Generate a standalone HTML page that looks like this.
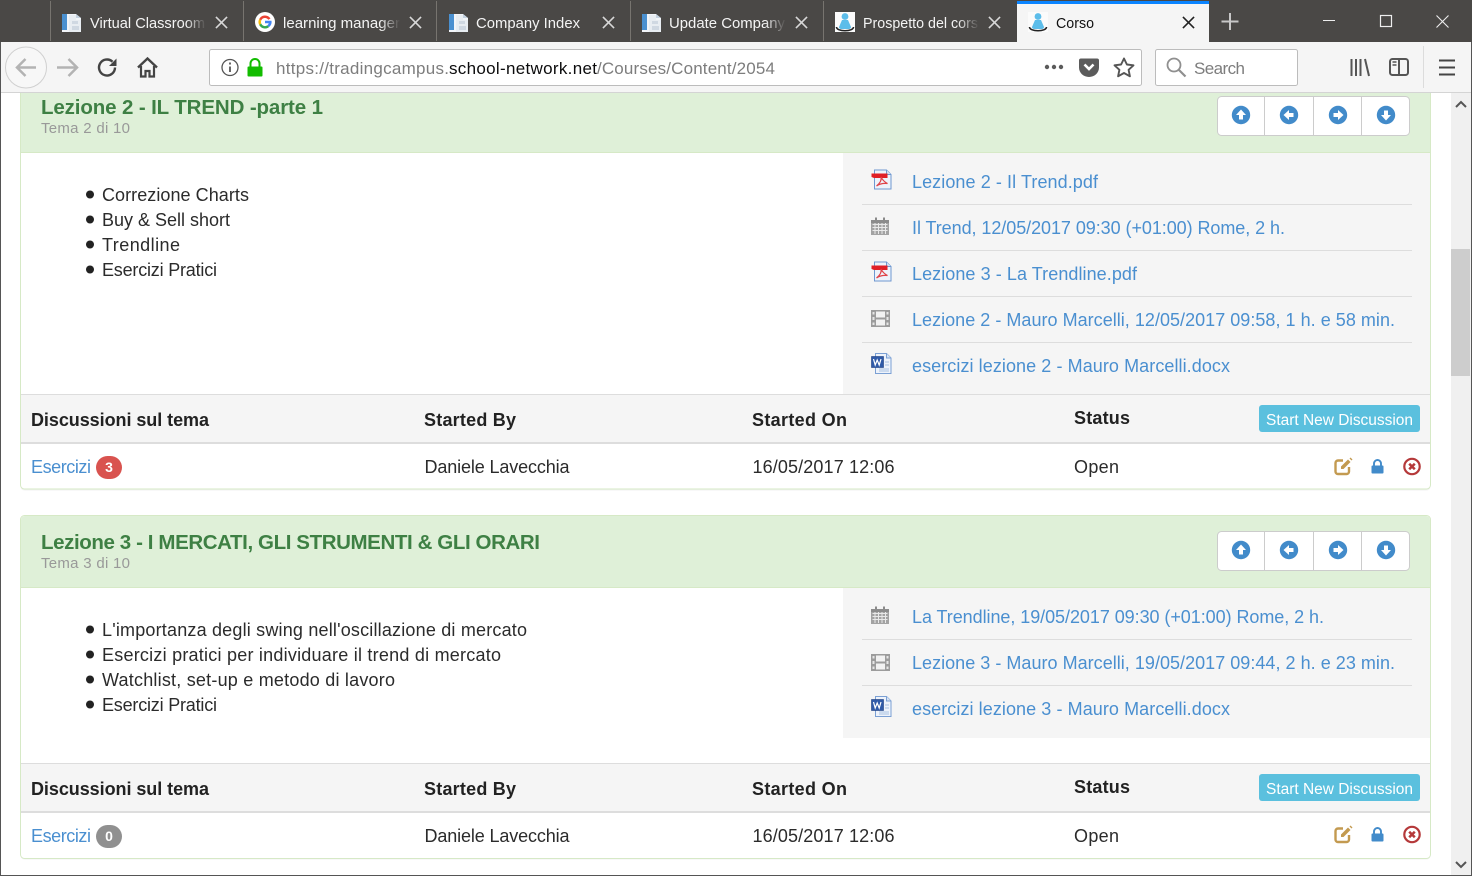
<!DOCTYPE html>
<html lang="it"><head><meta charset="utf-8"><title>Corso</title>
<style>
html,body{margin:0;padding:0;background:#fff;overflow:hidden}
svg{display:block;font-family:"Liberation Sans",sans-serif}
.tab{font-size:15px;fill:#f4f4f4}
.h{font-weight:bold;font-size:20.500px;fill:#3e8044}
.s{font-size:15px;fill:#999}
.b{font-size:18px;fill:#2b2b2b}
.l{font-size:18px;fill:#4a8fd0}
.t{font-weight:bold;font-size:18px;fill:#222}
.w{font-size:15.500px;fill:#fff}
</style></head><body>
<svg width="1472" height="876" viewBox="0 0 1472 876" xmlns="http://www.w3.org/2000/svg">
<defs>
<linearGradient id="fd" x1="0" x2="1" y1="0" y2="0"><stop offset="0" stop-color="#4a4846" stop-opacity="0"/><stop offset="1" stop-color="#4a4846"/></linearGradient>
<symbol id="doc" viewBox="0 0 20 20" overflow="visible"><path d="M0 2h14l5 4v14H0z" fill="#f2f5f9"/><path d="M0 2h5v16H0z" fill="#4a90d0"/><path d="M7 3h7v5h5v12H7z" fill="#e8edf2"/><path d="M10 9h6v3h-6zM10 14h7v4h-7z" fill="#cfd8e2"/><path d="M14 2l5 4h-5z" fill="#c4d2e0"/></symbol>
<symbol id="avatar" viewBox="0 0 20 20" overflow="visible"><rect width="20" height="20" fill="#fbfbfb"/><circle cx="10" cy="4.500" r="3.400" fill="#5cbdea"/><path d="M7 8h6l3 7a3 2 0 0 1-2 2H6a3 2 0 0 1-2-2z" fill="#5cbdea"/><path d="M1.500 15c0 5 17 5 17 0" fill="none" stroke="#222" stroke-width="1.600"/></symbol>
<symbol id="x" viewBox="-7 -7 14 14" overflow="visible"><path d="M-6-6L6 6M6-6L-6 6" stroke="currentColor" stroke-width="1.700" fill="none"/></symbol>
<symbol id="pdf" viewBox="0 0 21 21" overflow="visible"><path d="M3.500 1h12l4.500 4.500v14.500h-16.500z" fill="#eef3fb" stroke="#6f98d0"/><path d="M15.500 1v4.500h4.500" fill="#d5e2f3" stroke="#6f98d0"/><path d="M0.500 4.500h16v4.500h-13.500l-2.500-1z" fill="#e01f26"/><path d="M10 8c1 4-2 7-4.500 9 3-2 7-3 11-2.500-3-1.500-5-3.500-6.500-6.500z" fill="none" stroke="#e0444a" stroke-width="1.200"/></symbol>
<symbol id="cal" viewBox="0 0 18 18" overflow="visible"><path d="M0 3h18v15H0z" fill="#a3a3a3"/><path d="M4 .5h2v3H4zM12 .5h2v3h-2z" fill="#8a8a8a"/><path d="M0 3h18v3H0z" fill="#8c8c8c"/><path d="M1.500 7.500h15M1.500 10.500h15M1.500 13.500h15M4 6v11M7.500 6v11M11 6v11M14.500 6v11" stroke="#e9e9e9" stroke-width="1"/></symbol>
<symbol id="film" viewBox="0 0 19 17" overflow="visible"><rect width="19" height="17" fill="#9c9c9c"/><rect x="5" y="1.500" width="9" height="6" fill="#f2f2f2"/><rect x="5" y="9.500" width="9" height="6" fill="#f2f2f2"/><path d="M1.500 2h2v2.500h-2zM1.500 7h2v3h-2zM1.500 12.500h2v2.500h-2zM15.500 2h2v2.500h-2zM15.500 7h2v3h-2zM15.500 12.500h2v2.500h-2z" fill="#e6e6e6"/></symbol>
<symbol id="word" viewBox="0 0 21 21" overflow="visible"><path d="M4.500 .5h11l4.500 4.500v15.500h-15.500z" fill="#eef3fb" stroke="#7ba0d4"/><path d="M15.500 .5v4.500h4.500" fill="#d5e2f3" stroke="#7ba0d4"/><rect x=".5" y="3.500" width="12" height="11" fill="#2f5aa8" stroke="#1e3f80" stroke-width=".6"/><path d="M2.500 6l1.700 6 2-5 2 5 1.800-6" fill="none" stroke="#fff" stroke-width="1.200"/><path d="M14 9h4M14 12h4M8 16h10M8 18h10" stroke="#a8c0e0"/></symbol>
<symbol id="up" viewBox="-9.500 -9.500 19 19" overflow="visible"><circle r="9.200" fill="#428bca"/><path d="M0-5.500L5 0H2v4.500h-4V0H-5z" fill="#fff"/></symbol>
<symbol id="left" viewBox="-9.500 -9.500 19 19" overflow="visible"><circle r="9.200" fill="#428bca"/><path d="M-5.500 0L0-5V-2h4.500v4H0V5z" fill="#fff"/></symbol>
<symbol id="right" viewBox="-9.500 -9.500 19 19" overflow="visible"><circle r="9.200" fill="#428bca"/><path d="M5.500 0L0-5V-2h-4.500v4H0V5z" fill="#fff"/></symbol>
<symbol id="down" viewBox="-9.500 -9.500 19 19" overflow="visible"><circle r="9.200" fill="#428bca"/><path d="M0 5.500L5 0H2v-4.500h-4V0H-5z" fill="#fff"/></symbol>
<symbol id="edit" viewBox="0 0 19 19" overflow="visible"><path d="M9 3.500H4a2.500 2.500 0 0 0-2.500 2.500v8.500A2.500 2.500 0 0 0 4 17h8.500a2.500 2.500 0 0 0 2.500-2.500V10" fill="none" stroke="#c39a50" stroke-width="2.400"/><path d="M7 9.500L14 2.500l2.500 2.500-7 7H7z" fill="#c39a50"/><path d="M15.500 1.500l1-1 2 2-1 1z" fill="#c39a50"/></symbol>
<symbol id="lock" viewBox="0 0 13 15" overflow="visible"><path d="M3 7V4.500a3.500 3.500 0 0 1 7 0V7" fill="none" stroke="#428bca" stroke-width="1.900"/><rect x=".5" y="6.500" width="12" height="8" rx="1" fill="#428bca"/></symbol>
<symbol id="rm" viewBox="-9.500 -9.500 19 19" overflow="visible"><circle r="7.700" fill="#fff" stroke="#b5393a" stroke-width="2.200"/><path d="M-2.800-2.800L2.800 2.800M2.800-2.800L-2.800 2.800" stroke="#b5393a" stroke-width="2.500"/></symbol>
<clipPath id="pc"><rect x="18" y="93" width="1415" height="400"/></clipPath>
</defs>

<rect width="1472" height="876" fill="#fff"/>

<!-- tab strip -->
<rect width="1472" height="42" fill="#4a4846"/>
<g stroke="#77746f"><path d="M50.500 1v40M243.500 1v40M436.500 1v40M630.500 1v40M823.500 1v40"/></g>
<use href="#doc" x="62" y="12" width="20" height="20"/>
<g transform="translate(255 12)"><circle cx="10" cy="10" r="10" fill="#fff"/><path d="M15.500 6.500A6.500 6.500 0 0 0 4.200 7L6.200 8.500A4 4 0 0 1 13.300 7.800z" fill="#ea4335"/><path d="M4.200 7a6.500 6.500 0 0 0 0 6l2-1.500a4 4 0 0 1 0-3z" fill="#fbbc05"/><path d="M4.200 13a6.500 6.500 0 0 0 10 2l-2-1.600a4 4 0 0 1-6-1.900z" fill="#34a853"/><path d="M16.500 8.800H10v2.500h3.700a3 3 0 0 1-1.500 2.100l2 1.600A6.500 6.500 0 0 0 16.500 8.800z" fill="#4285f4"/></g>
<use href="#doc" x="449" y="12" width="20" height="20"/>
<use href="#doc" x="642" y="12" width="20" height="20"/>
<use href="#avatar" x="835" y="12" width="20" height="20"/>
<text class="tab" x="90" y="28" textLength="115" lengthAdjust="spacingAndGlyphs">Virtual Classroom</text>
<text class="tab" x="283" y="28" textLength="117" lengthAdjust="spacingAndGlyphs">learning manager</text>
<text class="tab" x="476" y="28" textLength="104" lengthAdjust="spacingAndGlyphs">Company Index</text>
<text class="tab" x="669" y="28" textLength="116" lengthAdjust="spacingAndGlyphs">Update Company</text>
<text class="tab" x="863" y="28" textLength="115" lengthAdjust="spacingAndGlyphs">Prospetto del cors</text>
<g fill="url(#fd)"><rect x="186" y="10" width="20" height="24"/><rect x="380" y="10" width="20" height="24"/><rect x="765" y="10" width="21" height="24"/><rect x="958" y="10" width="21" height="24"/></g>
<g color="#d8d8d8"><use href="#x" x="215" y="16" width="13" height="13"/><use href="#x" x="409" y="16" width="13" height="13"/><use href="#x" x="602" y="16" width="13" height="13"/><use href="#x" x="795" y="16" width="13" height="13"/><use href="#x" x="988" y="16" width="13" height="13"/></g>
<rect x="1017" y="1" width="192" height="41" fill="#f5f5f5"/><rect x="1017" y="1" width="192" height="3" fill="#0a84ff"/>
<use href="#avatar" x="1028" y="12" width="20" height="20"/>
<text x="1056" y="28" font-size="15" fill="#111" textLength="38" lengthAdjust="spacingAndGlyphs">Corso</text>
<g color="#222"><use href="#x" x="1182" y="16" width="13" height="13"/></g>
<path d="M1230 13v17M1221.500 21.500h17" stroke="#c8c8c8" stroke-width="2" fill="none"/>
<path d="M1323 20.500h12" stroke="#eee" fill="none"/>
<rect x="1380.500" y="15.500" width="11" height="11" fill="none" stroke="#eee" stroke-width="1.200"/>
<path d="M1436.500 15.500l12 12M1448.500 15.500l-12 12" stroke="#eee" stroke-width="1.100" fill="none"/>

<!-- toolbar -->
<rect y="42" width="1472" height="50" fill="#f5f5f5"/>
<rect y="92" width="1472" height="1" fill="#d4d4d4"/>
<circle cx="26" cy="67.500" r="20.500" fill="#f7f7f7" stroke="#d0d0d0"/>
<path d="M36 67.500H17M25.500 59l-8.500 8.500 8.500 8.500" fill="none" stroke="#b3b3b3" stroke-width="2.500"/>
<path d="M57 67.500h19M68.500 59l8.500 8.500-8.500 8.500" fill="none" stroke="#b3b3b3" stroke-width="2.500"/>
<path d="M115 67.500a8 8 0 1 1-2.500-5.800" fill="none" stroke="#444" stroke-width="2.400"/><path d="M116.500 58.500v7.500h-7.500z" fill="#444"/>
<path d="M138 67.500l9.500-9 9.500 9" fill="none" stroke="#444" stroke-width="2.400"/><path d="M141 66v10.500h4.500v-5.500h4v5.500h4.500V66" fill="none" stroke="#444" stroke-width="2.200"/>
<rect x="209.500" y="49.500" width="932" height="36" rx="2" fill="#fff" stroke="#bcbcbc"/>
<circle cx="230" cy="67.500" r="8" fill="none" stroke="#555" stroke-width="1.300"/><path d="M230 66.500v5.500M230 62.500v2" stroke="#555" stroke-width="1.800"/>
<path d="M250.500 67v-3.500a4.500 4.500 0 0 1 9 0V67" fill="none" stroke="#12bc00" stroke-width="2"/><rect x="247.500" y="66.500" width="15" height="10" rx="1" fill="#12bc00"/>
<text x="276" y="74" font-size="17" fill="#7d7d7d" textLength="173" lengthAdjust="spacing">https://tradingcampus.</text>
<text x="449" y="74" font-size="17" fill="#0c0c0d" textLength="148" lengthAdjust="spacing">school-network.net</text>
<text x="597" y="74" font-size="17" fill="#7d7d7d" textLength="178" lengthAdjust="spacing">/Courses/Content/2054</text>
<g fill="#5b5b5b"><circle cx="1047" cy="67" r="2.200"/><circle cx="1054" cy="67" r="2.200"/><circle cx="1061" cy="67" r="2.200"/></g>
<path d="M1079 60.500a2 2 0 0 1 2-2h16a2 2 0 0 1 2 2v7a10 9.500 0 0 1-20 0z" fill="#5b5b5b"/><path d="M1084.500 64.500l4.500 4.500 4.500-4.500" fill="none" stroke="#fff" stroke-width="2.600"/>
<path d="M1124 58.500l2.900 6 6.600.8-4.900 4.500 1.300 6.500-5.900-3.300-5.900 3.300 1.300-6.500-4.900-4.500 6.600-.8z" fill="none" stroke="#555" stroke-width="1.900" stroke-linejoin="round"/>
<rect x="1155.500" y="49.500" width="142" height="36" rx="2" fill="#fff" stroke="#bcbcbc"/>
<circle cx="1174" cy="65" r="6.500" fill="none" stroke="#8f8f8f" stroke-width="1.800"/><path d="M1179 70l6.500 6.500" stroke="#8f8f8f" stroke-width="2.200"/>
<text x="1194" y="74" font-size="17" fill="#7d7d7d" textLength="51" lengthAdjust="spacing">Search</text>
<path d="M1351.500 59v17M1356 59v17M1360.500 59v17M1365 59l4 17" stroke="#555" stroke-width="2" fill="none"/>
<rect x="1390" y="59" width="18" height="16" rx="2.500" fill="none" stroke="#555" stroke-width="2"/><path d="M1399 59v16" stroke="#555" stroke-width="2"/><path d="M1392.500 62h4M1392.500 65h4" stroke="#555" stroke-width="1.500"/>
<path d="M1423.500 46v42" stroke="#dcdcdc"/>
<path d="M1439 60.500h16M1439 67.500h16M1439 74.500h16" stroke="#444" stroke-width="2"/>

<!-- page background / panel 1 -->
<g clip-path="url(#pc)">
<rect x="20.500" y="71" width="1410" height="419.500" rx="4" fill="#ececec" opacity=".7"/>
<rect x="20.500" y="70" width="1410" height="419" rx="4" fill="#fff" stroke="#d6e9c6"/>
<rect x="21" y="93" width="1409" height="59" fill="#dff0d8"/>
<rect x="21" y="152" width="1409" height="1" fill="#d6e9c6"/>
<rect x="843" y="153" width="587" height="241" fill="#f5f5f5"/>
<rect x="21" y="394" width="1409" height="48" fill="#f5f5f5"/>
<rect x="21" y="394" width="1409" height="1" fill="#ddd"/>
<rect x="21" y="442" width="1409" height="2" fill="#ddd"/>
</g>
<text class="h" x="41" y="114" textLength="282" lengthAdjust="spacing">Lezione 2 - IL TREND -parte 1</text>
<text class="s" x="41" y="133" textLength="89" lengthAdjust="spacing">Tema 2 di 10</text>
<rect x="1217.500" y="96.500" width="192" height="39" rx="4" fill="#fff" stroke="#ccc"/>
<path d="M1264.500 96v40M1313.500 96v40M1361.500 96v40" stroke="#ccc"/>
<use href="#up" x="1231.500" y="105.500" width="19" height="19"/><use href="#left" x="1279.500" y="105.500" width="19" height="19"/><use href="#right" x="1328.500" y="105.500" width="19" height="19"/><use href="#down" x="1376.500" y="105.500" width="19" height="19"/>
<g fill="#222"><circle cx="90" cy="194.500" r="4"/><circle cx="90" cy="219.500" r="4"/><circle cx="90" cy="244.500" r="4"/><circle cx="90" cy="269.500" r="4"/></g>
<text class="b" x="102" y="201" textLength="147" lengthAdjust="spacing">Correzione Charts</text>
<text class="b" x="102" y="226" textLength="128" lengthAdjust="spacing">Buy &amp; Sell short</text>
<text class="b" x="102" y="251" textLength="78" lengthAdjust="spacing">Trendline</text>
<text class="b" x="102" y="276" textLength="115" lengthAdjust="spacing">Esercizi Pratici</text>
<path d="M862 204.500h550M862 250.500h550M862 296.500h550M862 342.500h550" stroke="#ddd"/>
<use href="#pdf" x="871" y="169" width="21" height="21"/>
<use href="#cal" x="871" y="217" width="18" height="18"/>
<use href="#pdf" x="871" y="261" width="21" height="21"/>
<use href="#film" x="871" y="310" width="19" height="17"/>
<use href="#word" x="871" y="353" width="21" height="21"/>
<text class="l" x="912" y="188" textLength="186" lengthAdjust="spacing">Lezione 2 - Il Trend.pdf</text>
<text class="l" x="912" y="234" textLength="373" lengthAdjust="spacing">Il Trend, 12/05/2017 09:30 (+01:00) Rome, 2 h.</text>
<text class="l" x="912" y="280" textLength="225" lengthAdjust="spacing">Lezione 3 - La Trendline.pdf</text>
<text class="l" x="912" y="326" textLength="483" lengthAdjust="spacing">Lezione 2 - Mauro Marcelli, 12/05/2017 09:58, 1 h. e 58 min.</text>
<text class="l" x="912" y="372" textLength="318" lengthAdjust="spacing">esercizi lezione 2 - Mauro Marcelli.docx</text>
<text class="t" x="31" y="426" textLength="178" lengthAdjust="spacing">Discussioni sul tema</text>
<text class="t" x="424" y="426" textLength="92" lengthAdjust="spacing">Started By</text>
<text class="t" x="752" y="426" textLength="95" lengthAdjust="spacing">Started On</text>
<text class="t" x="1074" y="424" textLength="56" lengthAdjust="spacing">Status</text>
<rect x="1259" y="405" width="161" height="27" rx="3" fill="#5bc0de"/>
<text class="w" x="1266" y="425" textLength="147" lengthAdjust="spacing">Start New Discussion</text>
<text class="l" x="31" y="473" textLength="60" lengthAdjust="spacing">Esercizi</text>
<rect x="96" y="456" width="26" height="23" rx="11.500" fill="#d9534f"/>
<text x="109" y="472" font-size="14" font-weight="bold" fill="#fff" text-anchor="middle">3</text>
<text class="b" x="424.500" y="473" textLength="145" lengthAdjust="spacing">Daniele Lavecchia</text>
<text class="b" x="752.500" y="473" textLength="142" lengthAdjust="spacing">16/05/2017 12:06</text>
<text class="b" x="1074" y="473" textLength="45" lengthAdjust="spacing">Open</text>
<use href="#edit" x="1334" y="457" width="19" height="19"/>
<use href="#lock" x="1371" y="459" width="13" height="15"/>
<use href="#rm" x="1402.500" y="457" width="19" height="19"/>

<!-- panel 2 -->
<rect x="20.500" y="516.500" width="1410" height="343" rx="4" fill="#ececec" opacity=".7"/>
<rect x="20.500" y="515.500" width="1410" height="343" rx="4" fill="#fff" stroke="#d6e9c6"/>
<path d="M21 587V520a4 4 0 0 1 4-4h1401a4 4 0 0 1 4 4v67z" fill="#dff0d8"/>
<rect x="21" y="587" width="1409" height="1" fill="#d6e9c6"/>
<rect x="843" y="588" width="587" height="150" fill="#f5f5f5"/>
<rect x="21" y="763" width="1409" height="48" fill="#f5f5f5"/>
<rect x="21" y="763" width="1409" height="1" fill="#ddd"/>
<rect x="21" y="811" width="1409" height="2" fill="#ddd"/>
<text class="h" x="41" y="549" textLength="499" lengthAdjust="spacing">Lezione 3 - I MERCATI, GLI STRUMENTI &amp; GLI ORARI</text>
<text class="s" x="41" y="568" textLength="89" lengthAdjust="spacing">Tema 3 di 10</text>
<rect x="1217.500" y="531.500" width="192" height="39" rx="4" fill="#fff" stroke="#ccc"/>
<path d="M1264.500 531v40M1313.500 531v40M1361.500 531v40" stroke="#ccc"/>
<use href="#up" x="1231.500" y="540.500" width="19" height="19"/><use href="#left" x="1279.500" y="540.500" width="19" height="19"/><use href="#right" x="1328.500" y="540.500" width="19" height="19"/><use href="#down" x="1376.500" y="540.500" width="19" height="19"/>
<g fill="#222"><circle cx="90" cy="629.500" r="4"/><circle cx="90" cy="654.500" r="4"/><circle cx="90" cy="679.500" r="4"/><circle cx="90" cy="704.500" r="4"/></g>
<text class="b" x="102" y="636" textLength="425" lengthAdjust="spacing">L'importanza degli swing nell'oscillazione di mercato</text>
<text class="b" x="102" y="661" textLength="399" lengthAdjust="spacing">Esercizi pratici per individuare il trend di mercato</text>
<text class="b" x="102" y="686" textLength="293" lengthAdjust="spacing">Watchlist, set-up e metodo di lavoro</text>
<text class="b" x="102" y="711" textLength="115" lengthAdjust="spacing">Esercizi Pratici</text>
<path d="M862 639.500h550M862 685.500h550" stroke="#ddd"/>
<use href="#cal" x="871" y="606" width="18" height="18"/>
<use href="#film" x="871" y="654" width="19" height="17"/>
<use href="#word" x="871" y="696" width="21" height="21"/>
<text class="l" x="912" y="623" textLength="412" lengthAdjust="spacing">La Trendline, 19/05/2017 09:30 (+01:00) Rome, 2 h.</text>
<text class="l" x="912" y="669" textLength="483" lengthAdjust="spacing">Lezione 3 - Mauro Marcelli, 19/05/2017 09:44, 2 h. e 23 min.</text>
<text class="l" x="912" y="715" textLength="318" lengthAdjust="spacing">esercizi lezione 3 - Mauro Marcelli.docx</text>
<text class="t" x="31" y="795" textLength="178" lengthAdjust="spacing">Discussioni sul tema</text>
<text class="t" x="424" y="795" textLength="92" lengthAdjust="spacing">Started By</text>
<text class="t" x="752" y="795" textLength="95" lengthAdjust="spacing">Started On</text>
<text class="t" x="1074" y="793" textLength="56" lengthAdjust="spacing">Status</text>
<rect x="1259" y="774" width="161" height="27" rx="3" fill="#5bc0de"/>
<text class="w" x="1266" y="794" textLength="147" lengthAdjust="spacing">Start New Discussion</text>
<text class="l" x="31" y="842" textLength="60" lengthAdjust="spacing">Esercizi</text>
<rect x="96" y="825" width="26" height="23" rx="11.500" fill="#909090"/>
<text x="109" y="841" font-size="14" font-weight="bold" fill="#fff" text-anchor="middle">0</text>
<text class="b" x="424.500" y="842" textLength="145" lengthAdjust="spacing">Daniele Lavecchia</text>
<text class="b" x="752.500" y="842" textLength="142" lengthAdjust="spacing">16/05/2017 12:06</text>
<text class="b" x="1074" y="842" textLength="45" lengthAdjust="spacing">Open</text>
<use href="#edit" x="1334" y="825" width="19" height="19"/>
<use href="#lock" x="1371" y="827" width="13" height="15"/>
<use href="#rm" x="1402.500" y="825" width="19" height="19"/>

<!-- scrollbar -->
<rect x="1451" y="93" width="20" height="782" fill="#f0f0f0"/>
<rect x="1451" y="249" width="19" height="127" fill="#cdcdcd"/>
<path d="M1456 107l5-5 5 5" fill="none" stroke="#555" stroke-width="2"/>
<path d="M1456 862l5 5 5-5" fill="none" stroke="#555" stroke-width="2"/>

<!-- window edge -->
<rect x="0" y="42" width="1" height="834" fill="#555"/>
<rect x="1471" y="42" width="1" height="834" fill="#555"/>
<rect x="0" y="875" width="1472" height="1" fill="#555"/>
</svg>
</body></html>
